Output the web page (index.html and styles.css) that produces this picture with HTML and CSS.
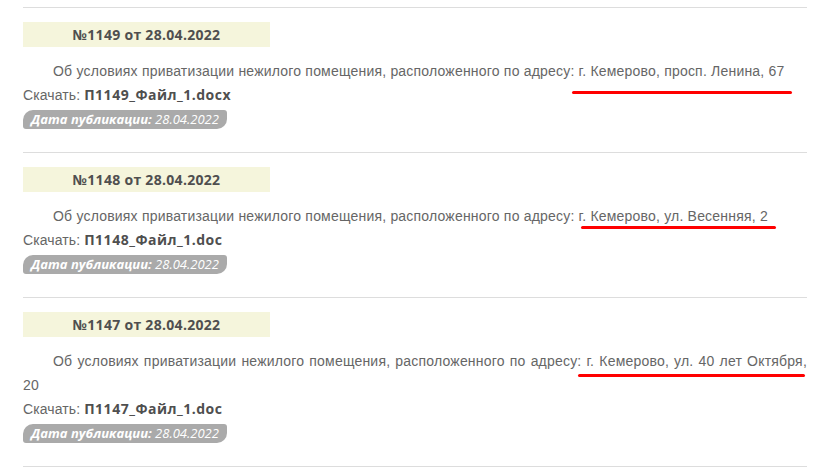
FILE: index.html
```html
<!DOCTYPE html>
<html lang="ru">
<head>
    <meta charset="UTF-8">
    <meta name="viewport" content="width=device-width, initial-scale=1.0">
    <title>Документы</title>
    <link rel="stylesheet" href="styles.css">
</head>
<body>

    <div class="doc-list">
        <div class="doc-item">
            <div class="doc-title">№1149 от 28.04.2022</div>
            <p class="doc-text">Об условиях приватизации нежилого помещения, расположенного по адресу: г. Кемерово, просп. Ленина, 67</p>
            <div class="doc-file">Скачать: <a href="#">П1149_Файл_1.docx</a></div>
            <div class="doc-date"><strong>Дата публикации:</strong> 28.04.2022</div>
            <span class="mark mark-1"></span>
        </div>

        <div class="doc-item">
            <div class="doc-title">№1148 от 28.04.2022</div>
            <p class="doc-text">Об условиях приватизации нежилого помещения, расположенного по адресу: г. Кемерово, ул. Весенняя, 2</p>
            <div class="doc-file">Скачать: <a href="#">П1148_Файл_1.doc</a></div>
            <div class="doc-date"><strong>Дата публикации:</strong> 28.04.2022</div>
            <span class="mark mark-2"></span>
        </div>

        <div class="doc-item">
            <div class="doc-title">№1147 от 28.04.2022</div>
            <p class="doc-text">Об условиях приватизации нежилого помещения, расположенного по адресу: г. Кемерово, ул. 40 лет Октября, 20</p>
            <div class="doc-file">Скачать: <a href="#">П1147_Файл_1.doc</a></div>
            <div class="doc-date"><strong>Дата публикации:</strong> 28.04.2022</div>
            <span class="mark mark-3"></span>
        </div>
    </div>

</body>
</html>
```

FILE: styles.css
```css
body {
    margin: 0;
    padding: 7px 0 0 0;
    font-family: "Liberation Sans", Arial, sans-serif;
    background: #fff;
}
.doc-list {
    width: 784px;
    margin-left: 23px;
    border-bottom: 1px solid #ddd;
}
.doc-item {
    position: relative;
    border-top: 1px solid #ddd;
    padding: 14px 0 23px 0;
}
.doc-title {
    width: 247px;
    height: 25px;
    line-height: 25px;
    background-color: #f5f5dc;
    text-align: center;
    font-family: "Open Sans", sans-serif;
    font-weight: 700;
    font-size: 14px;
    letter-spacing: 0.3px;
    color: #4f4f4f;
}
.doc-text {
    margin: 12px 0 0 0;
    text-indent: 30px;
    text-align: justify;
    font-size: 14px;
    letter-spacing: 0.2px;
    line-height: 24px;
    color: #666;
}
.doc-file {
    font-size: 14px;
    letter-spacing: 0.1px;
    line-height: 24px;
    color: #666;
}
.doc-file a {
    font-family: "Open Sans", sans-serif;
    font-weight: 700;
    letter-spacing: 0.5px;
    color: #4f4f4f;
    text-decoration: none;
}
.doc-date {
    display: inline-block;
    margin-top: 3px;
    height: 19px;
    line-height: 19px;
    padding: 0 8px;
    background-color: #aaa;
    border-radius: 10px 3px 10px 3px;
    font-family: "Open Sans", sans-serif;
    font-style: italic;
    font-size: 13px;
    color: #fff;
}
.doc-date strong {
    font-weight: 700;
}
/* red marker lines drawn over the address */
.mark {
    position: absolute;
    height: 3px;
    border-radius: 2px;
    background-color: #f00;
}
.mark-1 {
    left: 549px;
    top: 83px;
    width: 220px;
}
.mark-2 {
    left: 558px;
    top: 73px;
    width: 195px;
}
.mark-3 {
    left: 555px;
    top: 76px;
    width: 227px;
}
```
